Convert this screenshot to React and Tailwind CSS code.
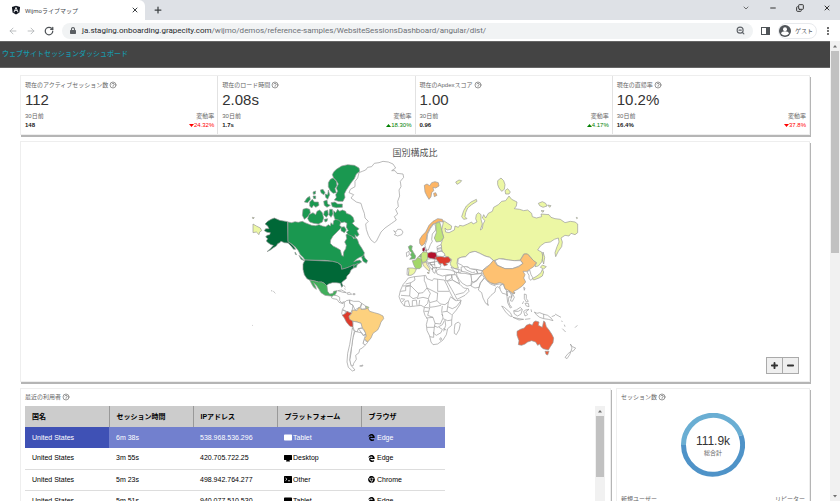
import React from 'react';
import { FaAngular, FaChrome, FaEdgeLegacy, FaLock } from 'react-icons/fa';
import { HiOutlineQuestionMarkCircle } from 'react-icons/hi';
import { ArrowLeft, ArrowRight, ChevronDown, Copy, EllipsisVertical, Minus, Plus, RotateCw, X, ZoomOut } from 'lucide-react';

const kpis = [
    { title: '現在のアクティブセッション数', value: '112', before: '148', change: '24.32%', up: false },
    { title: '現在のロード時間', value: '2.08s', before: '1.7s', change: '18.30%', up: true },
    { title: '現在のApdexスコア', value: '1.00', before: '0.96', change: '4.17%', up: true },
    { title: '現在の直帰率', value: '10.2%', before: '16.4%', change: '37.8%', up: false },
];

const columns = ['国名', 'セッション時間', 'IPアドレス', 'プラットフォーム', 'ブラウザ'];

const sessions = [
    { country: 'United States', time: '6m 38s', ip: '538.968.536.296', platform: 'Tablet', browser: 'Edge' },
    { country: 'United States', time: '3m 55s', ip: '420.705.722.25', platform: 'Desktop', browser: 'Edge' },
    { country: 'United States', time: '5m 23s', ip: '498.942.764.277', platform: 'Other', browser: 'Chrome' },
    { country: 'United States', time: '5m 51s', ip: '940.077.510.530', platform: 'Tablet', browser: 'Edge' },
];

// Land shapes, grouped by map region. Each entry is [fill, path].
const northAmerica = [
    ['#006837', 'M88 234L97 238 104 241 116 243 128 245 129 305 136 310 145 318 152 328 146 328 138 318 129 309 118 308 108 304 104 308 98 311 94 318 84 324 76 330 66 335 76 326 85 316 78 314 70 309 64 303 68 296 62 291 66 286 74 284 76 278 66 277 58 272 62 266 72 266 68 258 60 252 68 244 78 238Z'],
    ['#1a9850', 'M129 246L140 248 150 245 160 247 172 244 180 248 190 252 200 256 212 257 222 254 232 258 242 260 250 254 256 258 258 248 264 254 266 242 272 238 282 238 288 246 284 256 290 262 284 268 276 276 264 288 257 300 256 310 264 318 276 324 286 330 290 346 295 349 296 336 302 326 304 316 299 306 305 296 303 284 312 280 320 286 326 296 332 292 338 300 342 312 350 324 358 338 356 348 344 352 334 358 326 366 334 362 344 360 350 366 336 374 324 376 316 380 304 384 290 388 288 375 278 368 262 364 240 361 180 360 174 352 166 344 160 332 152 322 140 312 129 305Z'],
    ['#1a9850', 'M350 352L356 344 360 354 368 362 364 370 354 364ZM324 378L338 370 334 382 326 384ZM162 346L178 362 168 358ZM150 336L155 344 151 343Z'],
    ['#1a9850', 'M266 96L274 88 290 78 308 74 328 76 342 84 344 94 334 102 328 116 320 126 312 138 304 150 298 162 300 172 294 184 280 184 268 180 274 172 272 164 278 154 274 144 280 132 274 122 266 114 262 104ZM256 118L264 114 274 124 276 136 270 146 274 158 264 160 256 152 250 140 250 128Z'],
    ['#1a9850', 'M258 188L270 186 278 192 292 192 292 202 274 203 262 200ZM226 150L234 148 240 158 236 164 228 158ZM240 162L248 164 250 150 254 164 248 178 242 172ZM204 156L212 153 211 162 205 163ZM178 186L186 174 194 169 196 178 188 188ZM194 186L202 178 208 186 220 186 222 196 212 202 206 196 200 204 194 198ZM236 184L246 180 248 192 256 196 246 202 238 196ZM204 168L212 168 212 176 206 176Z'],
    ['#1a9850', 'M174 208L184 205 194 208 196 218 188 230 178 238 172 226ZM192 224L204 218 212 224 216 214 224 210 232 218 236 234 232 246 220 252 206 250 194 246 188 236ZM238 214L248 210 250 224 244 232 236 224ZM254 208L262 208 264 222 258 232 252 224ZM238 238L248 236 246 244 240 246Z'],
    ['#1a9850', 'M266 212L272 218 278 208 284 214 292 210 302 214 304 220 316 224 324 232 328 244 322 250 330 258 342 266 336 272 342 284 336 290 330 284 332 296 320 288 310 284 304 276 310 272 304 262 306 250 298 246 290 248 280 240 270 238 266 226ZM288 262L298 260 304 270 298 278 288 272Z'],
    ['#ffffff', 'M342 98L352 94 362 90 368 82 380 80 388 70 402 68 414 64 430 66 444 72 452 84 440 92 450 92 456 100 474 102 476 112 466 124 468 140 462 150 464 168 458 184 460 200 452 208 458 222 448 230 454 240 440 250 420 264 408 276 402 288 394 304 388 308 378 300 370 286 364 268 362 252 370 244 360 234 358 220 352 204 348 190 334 186 318 174 326 164 312 158 316 148 330 140 330 124 338 114Z'],
    ['#ffffff', 'M446 272L452 276 458 268 468 268 474 276 470 284 458 288 448 284 453 280Z'],
    ['#ecf7a4', 'M24 252L34 258 46 264 50 272 44 276 42 284 34 276 24 278ZM22 232L28 233 24 237Z'],
];

const southAmerica = [
    ['#006837', 'M180 30L262 34 278 38 288 46 290 58 304 54 314 50 326 44 326 54 318 60 314 70 306 78 304 86 294 94 290 98 294 108 290 112 286 100 274 98 262 98 250 102 244 108 238 100 230 96 220 96 206 92 194 90 186 86 178 74 174 58 174 42Z'],
    ['#41ae5b', 'M194 90L206 92 220 96 230 96 238 100 246 108 248 124 254 132 264 130 266 124 276 122 272 132 264 140 256 138 240 136 228 128 222 118 214 106 206 98 212 110 214 118 206 112 200 102Z'],
    ['#ffffff', 'M278 122L290 120 304 128 294 127ZM306 129L314 127 320 133 308 133ZM324 131L330 131 330 134 324 134ZM258 142L266 136 276 137 284 142 284 152 290 158 298 155 294 161 282 157 276 148 264 146ZM296 105L301 112M298 116L302 118'],
    ['#ffffff', 'M298 158L304 152 314 150 314 160 324 166 322 178 318 188 308 186 300 182 292 178 298 170ZM314 150L326 154 342 154 350 160 348 170 336 176 330 180 324 166 314 160ZM350 160L362 168 362 176 350 178 346 170Z'],
    ['#b5df78', 'M362 168L372 172 366 179Z'],
    ['#ffffff', 'M292 180L302 184 300 192 294 198 290 190Z'],
    ['#dd3c2d', 'M292 196L302 190 306 184 314 188 320 190 312 198 314 206 322 210 324 222 324 232 314 228 304 216 298 204Z'],
    ['#fdd17e', 'M320 190L322 180 336 182 342 172 348 178 360 178 368 174 374 184 388 188 402 192 414 198 416 206 408 216 404 228 398 240 384 250 378 264 368 276 358 266 364 258 360 246 356 238 350 232 348 220 336 216 324 214 314 208 312 200Z'],
    ['#ffffff', 'M324 214L336 216 348 220 352 234 340 236 336 246 328 242 324 230ZM340 236L350 234 356 240 362 250 356 256 348 246ZM356 268L368 277 362 284 354 282Z'],
    ['#ffffff', 'M330 244L338 246 348 248 356 258 362 252 358 266 354 280 360 286 352 294 344 298 342 308 332 316 334 328 326 340 324 348 316 344 314 330 318 310 320 290 324 262Z'],
    ['#ffffff', 'M322 234L328 244 324 262 320 290 316 312 314 330 318 346 330 360 322 363 310 352 306 336 308 310 314 284 318 260ZM344 348L354 345 352 349Z'],
    ['#4c7c64', 'M78 122L82 123M85 124L88 126M88 127L91 130M22 226L24 227'],
];

const eurasia = [
    ['#fdb565', 'M88 106L96 102 104 107 110 98 120 95 130 98 132 108 122 114 114 112 116 122 110 128 108 140 102 148 96 138 90 126ZM116 130L122 128 126 136 118 140Z'],
    ['#ecf7a4', 'M182 96L192 90 200 92 194 99 186 103ZM308 92L318 84 326 92 330 104 328 118 320 124 312 114 308 104ZM330 122L338 116 346 126 342 132 332 132ZM430 160L442 155 452 160 456 168 444 172 434 167ZM458 165L468 167 464 172ZM438 182L447 182 444 187ZM544 202L548 204 545 206Z'],
    ['#ecf7a4', 'M200 200L206 182 214 168 228 156 244 148 246 154 230 164 218 174 212 188 210 200 216 206 206 208Z'],
    ['#ecf7a4', 'M146 212L158 220 170 228 168 238 156 240 150 234 152 246 162 248 178 240 180 228 190 232 194 226 204 228 218 222 230 216 234 222 246 216 242 206 244 194 250 188 258 194 258 208 262 222 256 240 262 236 264 222 270 212 262 204 266 194 272 204 280 190 292 184 296 172 310 164 320 154 332 152 342 138 350 148 366 156 364 168 358 176 374 178 386 182 398 180 410 190 412 200 424 204 440 200 438 192 462 194 468 202 480 206 496 208 510 218 526 214 540 216 548 222 548 248 540 254 528 250 522 258 510 256 498 264 502 276 500 290 490 304 482 320 480 308 486 290 492 276 490 264 478 268 466 276 450 278 436 288 428 300 440 306 444 320 440 336 430 348 420 350 424 338 416 334 406 320 396 312 386 312 376 330 358 332 340 330 324 326 308 328 296 332 284 322 270 318 254 310 240 304 224 308 212 320 198 322 188 326 186 340 190 354 180 356 168 348 166 340 170 328 158 322 148 316 140 300 138 284 142 270 146 262 140 240Z'],
    ['#ffffff', 'M190 326L198 322 212 320 224 308 240 304 254 310 270 318 284 322 296 332 286 344 272 352 262 362 244 358 226 356 218 350 206 350 198 344 188 340Z'],
    ['#ffffff', 'M300 332L312 326 326 328 340 330 358 332 376 332 384 340 372 348 352 356 330 356 308 346Z'],
    ['#fec171', 'M262 362L274 354 286 342 296 330 306 346 330 356 352 356 372 350 384 340 376 330 388 312 398 312 406 322 416 332 424 338 416 350 404 358 396 364 384 364 390 374 386 384 392 396 382 408 368 418 356 424 358 430 354 430 342 422 330 416 326 402 314 398 300 402 286 398 274 388 266 374Z'],
    ['#ffffff', 'M396 366L404 360 408 374 414 384 408 391 402 386 402 376Z'],
    ['#ecf7a4', 'M444 306L449 322 446 342 442 330ZM436 352L442 345 454 350 446 357ZM442 358L446 366 442 378 432 384 416 390 412 386 426 378 438 368Z'],
    ['#fdb565', 'M74 268L82 256 92 246 102 226 114 214 128 206 142 208 144 216 132 214 122 220 114 222 104 236 96 252 94 268 88 282 80 288 74 280Z'],
    ['#ffffff', 'M116 222L122 228 122 240 112 252 110 268 112 274 106 284 100 300 94 300 90 286 96 270 98 252 106 236Z'],
    ['#bfe57a', 'M122 220L134 216 138 230 142 250 146 262 138 274 124 276 118 264 124 248Z'],
    ['#a50026', 'M82 296L89 291 90 298 87 305 83 303ZM91 300L95 300 94 305Z'],
    ['#c6e77f', 'M78 312L84 306 96 306 100 314 98 326 94 334 82 338 78 328Z'],
    ['#8ccc6a', 'M70 320L78 312 78 322Z'],
    ['#b3102b', 'M98 310L108 306 122 308 126 318 122 328 108 326 98 322Z'],
    ['#dd3c2d', 'M120 322L136 318 148 322 160 320 168 330 162 338 152 340 158 344 148 348 142 340 134 342 128 334Z'],
    ['#68bd63', 'M40 290L46 286 52 288 50 298 56 308 62 318 60 326 44 328 50 320 46 314 50 308 44 302Z'],
    ['#ffffff', 'M34 308L42 304 43 314 35 320ZM126 290L138 284 140 292 126 296ZM126 298L140 296 140 304 128 304ZM124 308L138 302 150 312 146 320 126 318Z'],
    ['#a3d768', 'M52 332L62 330 68 322 80 328 80 340 80 350 74 356 62 356 56 344Z'],
    ['#ecf7a4', 'M38 354L54 354 64 358 58 370 48 376 40 376Z'],
    ['#ffffff', 'M37 356L42 358 40 376 36 374Z'],
    ['#f8f0ad', 'M82 340L94 336 96 344 104 356 104 364 98 360 88 350ZM96 368L102 366 102 371Z'],
    ['#ffffff', 'M96 328L108 326 120 328 118 336 104 338 96 336ZM104 338L118 336 128 334 138 344 136 352 118 354 110 348ZM98 340L108 342 114 352 112 360 104 350ZM112 354L126 352 122 360 120 370 114 366ZM118 336L120 350M128 334L132 342 138 344M104 344L120 344'],
    ['#ffffff', 'M124 362L132 357 150 358 168 360 180 366 178 374 160 374 142 378 126 372ZM168 352L180 356 192 360 190 368 180 366ZM188 356L200 362 196 368 190 366'],
];

const southEast = [
    ['#ffffff', 'M198 52L210 48 228 56 244 60 248 70 232 74 212 66 200 64ZM206 50L214 60 232 68 240 66M244 58L262 62 258 70 248 70ZM184 66L196 70 210 70 228 74 230 90 228 106 216 108 202 100 192 88 186 78ZM170 74L182 74 190 90 194 100 186 98 172 90ZM152 78L170 74 170 84 158 92 152 92Z'],
    ['#ffffff', 'M156 94L172 90 186 98 196 104 206 114 220 116 222 124 210 136 186 148 180 136 170 118 162 104ZM182 134L206 128 216 118'],
    ['#ffffff', 'M228 74L246 72 262 70 252 82 246 92 236 98 230 92ZM262 74L268 84 256 98 252 112 240 114 228 108 232 98 246 90 252 82ZM268 84L276 92 290 100 302 104 314 102 322 104 316 116 308 110 302 114 300 126 288 136 278 148 278 164 272 160 264 144 260 128 250 120 256 100ZM276 92L286 102 302 108M276 160L281 165 278 168'],
    ['#ffffff', 'M314 108L324 102 330 116 336 124 338 138 332 132 322 130 316 120ZM334 124L344 126 352 134 350 142 342 140 340 150 344 164 350 172 346 174 338 158 336 140ZM342 122L350 122 352 130 358 142 352 154 346 152 350 142 348 132ZM386 112L390 114 388 121ZM356 127L360 128 357 132Z'],
    ['#ffffff', 'M320 168L328 172 346 188 352 200 344 198 332 186ZM354 202L372 206 386 208 372 210ZM356 182L364 180 376 172 382 178 378 192 368 198 358 192ZM358 184L370 184 380 178M386 184L392 180 402 178 392 186 398 194 390 198ZM388 132L394 134 394 146 400 154 394 156 388 146ZM390 160L400 160 402 170 394 168ZM382 162L386 154M390 208L406 206M408 178L410 186'],
    ['#ffffff', 'M418 186L426 190 434 188 444 192 458 196 468 204 474 212 460 208 446 206 434 202 424 194ZM446 192L446 206M470 200L480 196M480 192L498 202M500 212L502 216M502 236L512 246M540 233L547 226M508 224L510 230'],
    ['#ef5e39', 'M366 244L376 238 388 234 394 226 404 222 412 226 416 216 422 213 432 216 430 226 442 232 446 213 450 216 454 230 462 240 470 252 476 264 474 278 466 290 460 300 444 296 438 290 434 282 428 286 422 276 410 272 398 276 390 282 380 286 370 284 372 272 366 256ZM450 304L462 304 458 315 453 313Z'],
    ['#ffffff', 'M526 282L532 290 542 294 534 304 528 302 531 294ZM528 304L524 314 516 326 510 322 520 310ZM180 222L190 216 196 222 192 240 184 254 178 250 178 238Z'],
    ['#ffffff', 'M40 84L58 80 78 78 92 76 96 86 112 92 116 86 130 88 148 90 156 106 164 124 174 144 184 152 198 150 196 162 184 180 172 194 170 212 170 226 158 236 154 254 144 270 128 282 114 284 108 276 104 258 96 242 94 224 98 208 90 196 86 184 88 172 78 166 62 168 44 170 28 168 18 156 12 140 16 122 24 104 34 92Z'],
    // African borders
    ['none', 'M32 102L48 98 60 90 58 80M24 108L46 106 46 98M46 106L70 130 84 128 96 114 92 100 88 92 88 78M16 124L32 122 32 110 46 108M46 108L44 138 18 136M44 138L54 146 68 142 72 128M66 146L84 142 100 146 106 130 96 114 128 130M100 146L104 158 126 152 128 128M128 88L128 124 162 124M126 152L136 162 150 164 160 156 166 142M160 156L158 170 172 176 184 170 198 152M72 166L74 150M100 150L98 160 88 170M104 160L104 172 120 170 138 166M88 172L104 174M166 140L182 152'],
    ['none', 'M104 174L98 196 114 202 120 220 136 222 144 204 140 184 142 168M158 170L156 184 170 194M142 186L156 184M144 206L158 212 170 210M94 204L114 202M120 220L118 232 96 232M118 228L128 232 142 224 148 212M150 210L152 226 146 244M118 232L116 250 124 256 138 248 142 238 132 232M104 260L116 262 116 246M134 266L138 263 140 268 136 271ZM28 168L30 154 40 152 44 168M52 168L52 152 64 150 66 166M18 146L30 148M20 156L28 150M88 184L100 184M144 198L140 192M144 236L154 240'],
];

const regions = [
    { transform: 'translate(0 -45)', shapes: northAmerica },
    { transform: 'translate(0 285)', shapes: southAmerica },
    { transform: 'translate(450 285)', shapes: southEast },
    { transform: 'translate(450 -15)', shapes: eurasia },
];

const WorldMap = () => (
    <svg viewBox="0 0 1020 675" className="w-[340px] h-[225px]" role="img" aria-label="国別構成比">
        {regions.map((region) => (
            <g key={region.transform} transform={region.transform} stroke="#999" strokeWidth="2" strokeLinejoin="round">
                {region.shapes.map(([fill, d]) => (
                    <path key={d} d={d} fill={fill} />
                ))}
            </g>
        ))}
    </svg>
);

const Help = () => <HiOutlineQuestionMarkCircle className="w-2 h-2 shrink-0" />;

const PlatformIcon = ({ name }) => {
    if (name === 'Desktop') {
        return (
            <svg viewBox="0 0 16 14" className="w-2 h-[7px]" fill="currentColor">
                <path d="M1 0h14a1 1 0 0 1 1 1v8a1 1 0 0 1-1 1h-4l1 3H4l1-3H1a1 1 0 0 1-1-1V1a1 1 0 0 1 1-1z" />
            </svg>
        );
    }
    if (name === 'Other') {
        return (
            <svg viewBox="0 0 16 14" className="w-2 h-[7px]">
                <rect width="16" height="14" rx="1" fill="currentColor" />
                <path d="M3 4l3 2.500-3 2.500M8 9.500h4" stroke="#fff" strokeWidth="1.500" fill="none" />
            </svg>
        );
    }
    return (
        <svg viewBox="0 0 16 14" className="w-2 h-[7px]" fill="currentColor">
            <path d="M1.500 1h13A1.500 1.500 0 0 1 16 2.500v9a1.500 1.500 0 0 1-1.500 1.500h-13A1.500 1.500 0 0 1 0 11.500v-9A1.500 1.500 0 0 1 1.500 1z" />
        </svg>
    );
};

const BrowserBar = () => (
    <header className="shrink-0 font-[Roboto,'Noto_Sans_CJK_JP',sans-serif]">
        {/* Tabs */}
        <div className="h-5 bg-[#dee1e6] flex items-center">
            <div className="w-[145px] h-full bg-white rounded-tr-md flex items-center pl-[11px] pr-[6px]">
                <FaAngular className="w-[10px] h-[10px] text-[#10151f]" />
                <span className="ml-1 text-[6px] text-[#45494d]">Wijmoライブマップ</span>
                <button aria-label="Close tab" className="ml-auto"><X className="w-2 h-2 text-[#3c4043]" strokeWidth={3} /></button>
            </div>
            <button aria-label="New tab" className="ml-2"><Plus className="w-[10px] h-[10px] text-[#3c4043]" strokeWidth={3} /></button>
            <div className="ml-auto mb-1 flex items-center gap-[19px] pr-[9px] text-[#333]">
                <button aria-label="Search tabs"><ChevronDown className="w-2 h-2" /></button>
                <button aria-label="Minimize"><Minus className="w-2 h-2" strokeWidth={3} /></button>
                <button aria-label="Restore"><Copy className="w-2 h-2 -scale-y-100" strokeWidth={3} /></button>
                <button aria-label="Close"><X className="w-2 h-2" strokeWidth={3} /></button>
            </div>
        </div>

        {/* Address bar */}
        <div className="h-[21px] bg-white flex items-center pl-2">
            <div className="flex items-center gap-2 text-[#b0b3b6]">
                <button aria-label="Back"><ArrowLeft className="w-[10px] h-[10px]" /></button>
                <button aria-label="Forward"><ArrowRight className="w-[10px] h-[10px]" /></button>
                <button aria-label="Reload"><RotateCw className="w-[10px] h-[10px] text-[#505458]" strokeWidth={3} /></button>
            </div>
            <div className="ml-2 h-4 flex-1 bg-[#f1f3f4] rounded-full flex items-center px-2">
                <FaLock className="w-[6px] h-[7px] text-[#5a5e62]" />
                <input
                    aria-label="Address"
                    readOnly
                    className="sr-only"
                    value="ja.staging.onboarding.grapecity.com/wijmo/demos/reference-samples/WebsiteSessionsDashboard/angular/dist/"
                />
                <span aria-hidden="true" className="ml-[6px] text-[8px] leading-3 text-[#6c7075]">
                    <span className="text-[#25282b]">ja.staging.onboarding.grapecity.com</span>/wijmo/demos/reference-samples/WebsiteSessionsDashboard/angular/dist/
                </span>
                <ZoomOut className="ml-auto w-[9px] h-[9px] text-[#5f6368]" strokeWidth={3} />
            </div>
            <button aria-label="Side panel" className="ml-2 w-[9px] h-2 border border-[#505458] border-r-4" />
            <button className="ml-2 h-4 w-[39px] rounded-full border border-[#e8eaed] flex items-center gap-1 text-[6px] text-[#505458]">
                <svg viewBox="0 0 24 24" className="w-3 h-3 shrink-0">
                    <circle cx="12" cy="12" r="12" fill="#505458" />
                    <circle cx="12" cy="8.500" r="4" fill="#fff" />
                    <path d="M4 17c1-6 15-6 16 0-4 5-12 5-16 0z" fill="#fff" />
                </svg>
                <span className="whitespace-nowrap">ゲスト</span>
            </button>
            <button aria-label="Menu" className="ml-[6px] mr-[7px]"><EllipsisVertical className="w-[10px] h-[10px] text-[#444]" strokeWidth={3} /></button>
        </div>
    </header>
);

const Kpi = ({ title, value, before, change, up }) => (
    <div className="flex-1 border-r border-[#e2e2e2] last:border-r-0 pl-1 pr-[3px] py-[5px] text-[6px] leading-2 text-[#666]">
        <h2 className="flex items-center gap-px">{title}<Help /></h2>
        <p className="mt-[2px] text-[15px] leading-[18px] text-[#333]">{value}</p>
        <div className="mt-[3px] flex justify-between">
            <span>30日前</span>
            <span>変動率</span>
        </div>
        <div className="mt-px flex justify-between">
            <b className="text-[#222]">{before}</b>
            <span className={up ? 'flex items-center text-[#008000]' : 'flex items-center text-[#ff0000]'}>
                <svg viewBox="0 0 10 6" className="w-[5px] h-[3px]" fill="currentColor">
                    <path d={up ? 'M0 6L5 0l5 6z' : 'M0 0h10L5 6z'} />
                </svg>
                {change}
            </span>
        </div>
    </div>
);

const SessionTable = () => (
    <table className="w-[420px] table-fixed border-collapse text-left text-[7px] leading-[10px] text-black">
        <thead>
            <tr className="h-[21px] bg-[#ccc]">
                {columns.map((name) => (
                    <th key={name} className="pl-[7px] font-bold border-r border-[#999] last:border-r-0">{name}</th>
                ))}
            </tr>
        </thead>
        <tbody>
            {sessions.map((row, i) => (
                <tr key={row.ip} className={i === 0 ? 'h-[21px] bg-[#7280ce] text-white' : 'h-[21px] border-b border-[#ddd]'}>
                    <td className={i === 0 ? 'pl-[7px] bg-[#3f51b5]' : 'pl-[7px]'}>{row.country}</td>
                    <td className="pl-[7px]">{row.time}</td>
                    <td className="pl-[7px]">{row.ip}</td>
                    <td className="pl-[7px]">
                        <span className="flex items-center gap-px"><PlatformIcon name={row.platform} />{row.platform}</span>
                    </td>
                    <td className="pl-[7px]">
                        <span className="flex items-center gap-[2px]">
                            {row.browser === 'Edge' ? <FaEdgeLegacy className="w-[7px] h-[7px] text-black" /> : <FaChrome className="w-[7px] h-[7px] text-black" />}
                            {row.browser}
                        </span>
                    </td>
                </tr>
            ))}
        </tbody>
    </table>
);

const ScrollArrow = ({ down }) => (
    <svg viewBox="0 0 8 8" className="w-2 h-2 mx-auto my-px shrink-0" fill="#707070">
        <path d={down ? 'M2 3h4L4 5.500z' : 'M2 5.500h4L4 3z'} />
    </svg>
);

const card = 'bg-white border border-[#eee] shadow-[1px_2px_0_#b5b5b5]';

const App = () => {
    return (
        <div className="h-screen flex flex-col overflow-hidden bg-white font-['Liberation_Sans','Noto_Sans_CJK_JP',sans-serif]">
            <BrowserBar />

            <div className="flex-1 min-h-0 flex">
                <div className="flex-1 min-w-0 overflow-hidden">
                    <div className="h-[27px] bg-[#444] border-y border-[#666] flex items-center pl-[2px]">
                        <h1 className="text-[7px] font-medium text-[#1799ab]">ウェブサイトセッションダッシュボード</h1>
                    </div>

                    <main className="px-5 pt-[7px] flex flex-col gap-[6px]">
                        <section className={`${card} flex`}>
                            {kpis.map((kpi) => <Kpi key={kpi.title} {...kpi} />)}
                        </section>

                        {/* Map */}
                        <section className={`${card} relative h-[241px] flex flex-col items-center pt-[5px]`}>
                            <h2 className="text-[9px] leading-3 text-[#555]">国別構成比</h2>
                            <div className="-mt-1"><WorldMap /></div>
                            <div className="absolute right-[10px] bottom-[7px] flex text-[#333]">
                                <button aria-label="Zoom in" className="w-[17px] h-[17px] bg-[#efefef] border border-[#aaa] flex items-center justify-center"><Plus className="w-[9px] h-[9px]" strokeWidth={5} /></button>
                                <button aria-label="Zoom out" className="w-4 h-[17px] bg-[#efefef] border border-l-0 border-[#aaa] flex items-center justify-center"><Minus className="w-[9px] h-[9px]" strokeWidth={5} /></button>
                            </div>
                        </section>

                        <div className="flex gap-[5px]">
                            <section className={`${card} flex-1 h-[200px] px-1 pt-1`}>
                                <h2 className="flex items-center gap-px text-[6px] leading-2 text-[#666]">最近の利用者<Help /></h2>
                                <div className="mt-[5px] flex justify-between items-start">
                                    <SessionTable />
                                    <div className="w-[10px] h-[170px] mr-px bg-[#f1f1f1] flex flex-col">
                                        <ScrollArrow />
                                        <div className="mx-px h-[61px] bg-[#c1c1c1]" />
                                    </div>
                                </div>
                            </section>

                            <section className={`${card} w-[194px] h-[200px] px-1 pt-1 text-[6px] leading-2 text-[#666]`}>
                                <h2 className="flex items-center gap-px">セッション数<Help /></h2>
                                <div className="mt-3 grid place-items-center">
                                    <svg viewBox="0 0 64 64" className="col-start-1 row-start-1 w-16 h-16" fill="none" strokeWidth="5">
                                        <path d="M2.500 32A29.500 29.500 0 0 1 60 22.500" stroke="#6aaed3" />
                                        <path d="M60 22.500A29.500 29.500 0 1 1 2.500 32" stroke="#4f93c8" />
                                    </svg>
                                    <div className="col-start-1 row-start-1 text-center">
                                        <p className="text-[12px] leading-4 text-[#333]">111.9k</p>
                                        <p>総合計</p>
                                    </div>
                                </div>
                                <div className="mt-[18px] flex justify-between">
                                    <span>新規ユーザー</span>
                                    <span>リピーター</span>
                                </div>
                            </section>
                        </div>
                    </main>
                </div>

                {/* Page scrollbar */}
                <div className="w-[10px] shrink-0 bg-[#f1f1f1] flex flex-col">
                    <ScrollArrow />
                    <div className="mx-px h-[202px] bg-[#c1c1c1]" />
                    <div className="mt-auto"><ScrollArrow down /></div>
                </div>
            </div>
        </div>
    );
};

export default App;
